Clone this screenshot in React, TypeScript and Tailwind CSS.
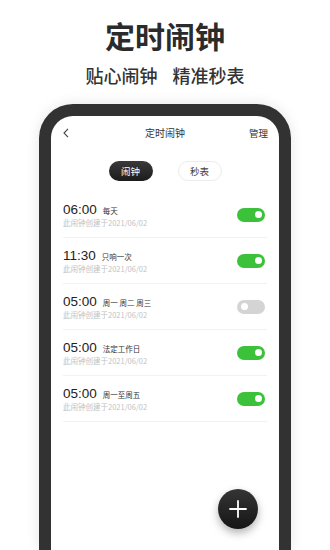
import React from "react";

type Alarm = { time: string; label: string; on: boolean };

const alarms: Alarm[] = [
  { time: "06:00", label: "每天", on: true },
  { time: "11:30", label: "只响一次", on: true },
  { time: "05:00", label: "周一 周二 周三", on: false },
  { time: "05:00", label: "法定工作日", on: true },
  { time: "05:00", label: "周一至周五", on: true },
];

const cjk = "font-['Noto_Sans_CJK_SC','Noto_Sans',sans-serif]";

function Toggle({ on }: { on: boolean }) {
  return (
    <div
      className={`flex h-[14px] w-[28px] items-center rounded-full px-[3.5px] ${
        on ? "justify-end bg-[#3cc23a]" : "justify-start bg-[#d4d4d4]"
      }`}
    >
      <div className="h-[7px] w-[7px] rounded-full bg-white" />
    </div>
  );
}

function AlarmRow({ alarm }: { alarm: Alarm }) {
  return (
    <div className="flex h-[46px] items-center justify-between border-b border-[#f2f2f2] pr-[2px]">
      <div className="flex flex-col pt-[2px]">
        <div className="flex items-baseline gap-[6px]">
          <span className="font-['Liberation_Sans',Arial,sans-serif] text-[13.5px] leading-[14px] text-[#222]">
            {alarm.time}
          </span>
          <span className={`${cjk} text-[7.5px] leading-[10px] text-[#333]`}>{alarm.label}</span>
        </div>
        <span className={`${cjk} mt-[1px] text-[7.5px] leading-[10px] text-[#c2c2c2]`}>
          此闹钟创建于2021/06/02
        </span>
      </div>
      <Toggle on={alarm.on} />
    </div>
  );
}

export default function App() {
  return (
    <div className={`h-[550px] w-[330px] overflow-hidden bg-white ${cjk}`}>
      <div className="pt-[18px] text-center text-[30px] font-bold leading-[34px] text-[#2b2b2b]">
        定时闹钟
      </div>
      <div className="mt-[12px] flex justify-center gap-[15px] text-[18px] font-medium leading-[22px] text-[#333]">
        <span>贴心闹钟</span>
        <span>精准秒表</span>
      </div>

      <div className="ml-[39px] mt-[18px] h-[446px] w-[252px] rounded-t-[34px] bg-[#323232] px-[12px] pt-[12px] shadow-[0_0_14px_rgba(0,0,0,0.10)]">
        <div className="relative h-full rounded-t-[22px] bg-white">
          <div className="grid h-[34px] grid-cols-[1fr_auto_1fr] items-center px-[11px]">
            <svg width="6" height="10" viewBox="0 0 6 10" className="ml-[1px]">
              <polyline points="5,0.8 1,5 5,9.2" fill="none" stroke="#444" strokeWidth="1.1" />
            </svg>
            <span className="text-[10px] leading-[12px] text-[#333]">定时闹钟</span>
            <span className="justify-self-end text-[9.5px] leading-[12px] text-[#333]">管理</span>
          </div>

          <div className="mt-[11px] flex justify-center gap-[25px]">
            <div className="flex h-[20px] w-[44px] items-center justify-center rounded-full bg-gradient-to-b from-[#3a3a3a] to-[#1c1c1c] text-[9.5px] text-white">
              闹钟
            </div>
            <div className="flex h-[20px] w-[44px] items-center justify-center rounded-full border border-[#ececec] bg-white text-[9.5px] text-[#444]">
              秒表
            </div>
          </div>

          <div className="mt-[11px] pl-[12px] pr-[12px]">
            {alarms.map((a, i) => (
              <AlarmRow key={i} alarm={a} />
            ))}
          </div>

          <div className="absolute bottom-[21px] right-[21px] flex h-[40px] w-[40px] items-center justify-center rounded-full bg-gradient-to-b from-[#353535] to-[#161616] shadow-[0_4px_8px_rgba(0,0,0,0.3)]">
            <svg width="18" height="18" viewBox="0 0 18 18">
              <path d="M9 1v16M1 9h16" stroke="#fff" strokeWidth="1.8" strokeLinecap="round" />
            </svg>
          </div>
        </div>
      </div>
    </div>
  );
}
